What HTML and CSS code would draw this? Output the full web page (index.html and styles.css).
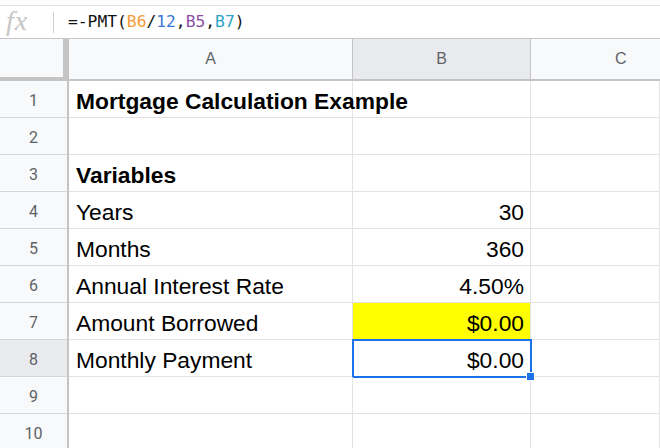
FILE: index.html
```html
<!DOCTYPE html>
<html>
<head>
<meta charset="utf-8">
<link rel="stylesheet" href="styles.css">
</head>
<body>
<div class="fbar">
  <span class="fx">fx</span>
  <span class="sep"></span>
  <span class="formula">=-PMT(<span class="c-or">B6</span>/<span class="c-bl">12</span>,<span class="c-pu">B5</span>,<span class="c-te">B7</span>)</span>
</div>
<div class="grid">
  <div class="corner"></div>
  <div class="colh">A</div>
  <div class="colh sel">B</div>
  <div class="colh last">C</div>

  <div class="rowh">1</div><div class="cell b">Mortgage Calculation Example</div><div class="cell"></div><div class="cell"></div>
  <div class="rowh">2</div><div class="cell"></div><div class="cell"></div><div class="cell"></div>
  <div class="rowh">3</div><div class="cell b">Variables</div><div class="cell"></div><div class="cell"></div>
  <div class="rowh">4</div><div class="cell">Years</div><div class="cell num">30</div><div class="cell"></div>
  <div class="rowh">5</div><div class="cell">Months</div><div class="cell num">360</div><div class="cell"></div>
  <div class="rowh">6</div><div class="cell">Annual Interest Rate</div><div class="cell num">4.50%</div><div class="cell"></div>
  <div class="rowh">7</div><div class="cell">Amount Borrowed</div><div class="cell num yellow">$0.00</div><div class="cell"></div>
  <div class="rowh sel">8</div><div class="cell">Monthly Payment</div><div class="cell num active">$0.00<span class="handle"></span></div><div class="cell"></div>
  <div class="rowh">9</div><div class="cell"></div><div class="cell"></div><div class="cell"></div>
  <div class="rowh">10</div><div class="cell"></div><div class="cell"></div><div class="cell"></div>
</div>
</body>
</html>
```
FILE: styles.css
```css
html, body {
  margin: 0;
  padding: 0;
  background: #fff;
  overflow: hidden;
}
body {
  width: 660px;
  height: 448px;
}
.fbar {
  margin-top: 5px;
  height: 34px;
  border-top: 1px solid #e3e3e3;
  border-bottom: 1px solid #c7c7c7;
  display: flex;
  align-items: center;
  box-sizing: border-box;
}
.fx {
  font-family: "Liberation Serif", serif;
  font-style: italic;
  font-size: 28px;
  color: #c6c6c6;
  width: 34px;
  margin-left: 6px;
  letter-spacing: 1px;
  line-height: 1;
  margin-top: -2px;
}
.sep {
  width: 1px;
  height: 21px;
  background: #d0d0d0;
  margin-left: 13px;
}
.formula {
  font-family: "DejaVu Sans Mono", monospace;
  font-size: 16.3px;
  color: #111;
  margin-left: 14px;
  line-height: 1;
}
.c-or { color: #f29b38; }
.c-bl { color: #3a78d4; }
.c-pu { color: #8e4ea6; }
.c-te { color: #2aa4c3; }

.grid {
  display: grid;
  grid-template-columns: 69px 284px 178px 129px;
  grid-template-rows: 42px repeat(10, 37px);
  width: 660px;
}
.corner {
  background: #f8f9fa;
  border-right: 6px solid #c4c4c4;
  border-bottom: 4px solid #c4c4c4;
  box-sizing: border-box;
}
.colh {
  background: #f8f9fa;
  border-right: 1px solid #c4c4c4;
  border-bottom: 2px solid #c4c4c4;
  box-sizing: border-box;
  display: flex;
  align-items: center;
  justify-content: center;
  font-family: "Liberation Sans", sans-serif;
  font-size: 16px;
  color: #5f6368;
}
.colh.sel { background: #e8eaed; }
.colh.last {
  border-right: 0;
  justify-content: flex-start;
  padding-left: 84px;
}
.rowh {
  background: #f8f9fa;
  border-right: 2px solid #c4c4c4;
  border-bottom: 1px solid #d6d6d6;
  box-sizing: border-box;
  display: flex;
  align-items: center;
  justify-content: center;
  padding-top: 2px;
  font-family: Roboto, "Liberation Sans", sans-serif;
  font-size: 16px;
  color: #5f6368;
}
.rowh.sel { background: #e8eaed; }
.cell {
  position: relative;
  border-right: 1px solid #e2e2e2;
  border-bottom: 1px solid #e2e2e2;
  box-sizing: border-box;
  display: flex;
  align-items: flex-end;
  padding: 0 6px 3px 7px;
  font-family: "Liberation Sans", Arial, sans-serif;
  font-size: 22.8px;
  line-height: 26px;
  color: #000;
  white-space: nowrap;
}
.cell.b { font-weight: bold; }
.cell.num { justify-content: flex-end; }
.cell.yellow { background: #ffff00; }
.cell.active {
  outline: 2px solid #1a73e8;
  outline-offset: -1px;
}
.handle {
  position: absolute;
  right: -5px;
  bottom: -5px;
  width: 7px;
  height: 7px;
  background: #1a73e8;
  border: 1px solid #fff;
  z-index: 2;
}
```
